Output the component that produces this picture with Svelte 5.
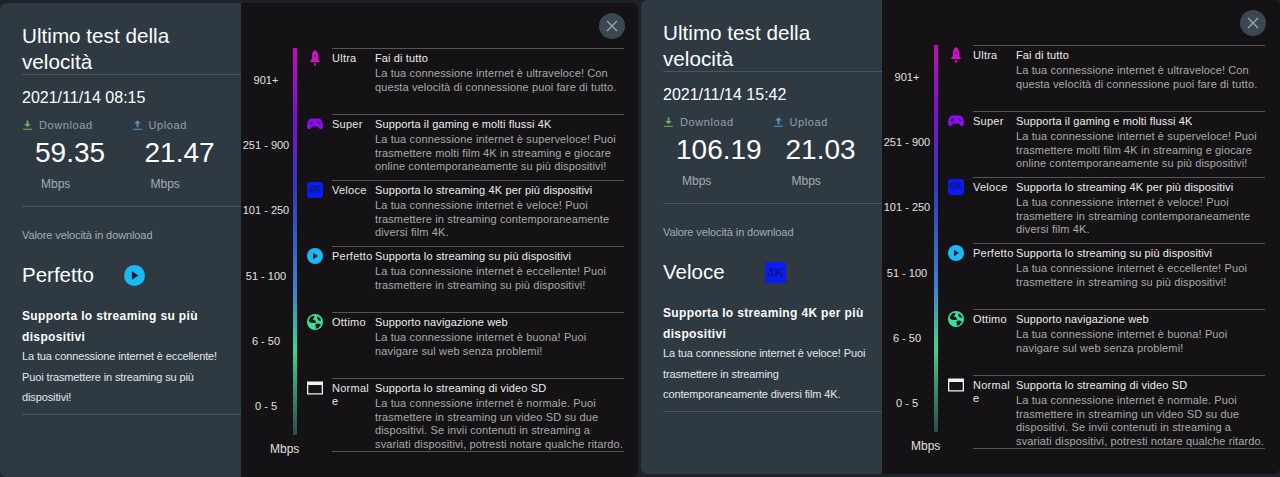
<script>
  const tests = [
    {
      date: '2021/11/14 08:15', down: '59.35', up: '21.47',
      level: 'Perfetto', icon: 'play',
      head: 'Supporta lo streaming su più dispositivi',
      text: 'La tua connessione internet è eccellente! Puoi trasmettere in streaming su più dispositivi!'
    },
    {
      date: '2021/11/14 15:42', down: '106.19', up: '21.03',
      level: 'Veloce', icon: '4k',
      head: 'Supporta lo streaming 4K per più dispositivi',
      text: 'La tua connessione internet è veloce! Puoi trasmettere in streaming contemporaneamente diversi film 4K.'
    }
  ]

  const ranges = ['901+', '251 - 900', '101 - 250', '51 - 100', '6 - 50', '0 - 5']

  const levels = [
    { icon: 'rocket', name: 'Ultra', head: 'Fai di tutto', text: 'La tua connessione internet è ultraveloce! Con questa velocità di connessione puoi fare di tutto.' },
    { icon: 'pad', name: 'Super', head: 'Supporta il gaming e molti flussi 4K', text: 'La tua connessione internet è superveloce! Puoi trasmettere molti film 4K in streaming e giocare online contemporaneamente su più dispositivi!' },
    { icon: '4k', name: 'Veloce', head: 'Supporta lo streaming 4K per più dispositivi', text: 'La tua connessione internet è veloce! Puoi trasmettere in streaming contemporaneamente diversi film 4K.' },
    { icon: 'play', name: 'Perfetto', head: 'Supporta lo streaming su più dispositivi', text: 'La tua connessione internet è eccellente! Puoi trasmettere in streaming su più dispositivi!' },
    { icon: 'globe', name: 'Ottimo', head: 'Supporto navigazione web', text: 'La tua connessione internet è buona! Puoi navigare sul web senza problemi!' },
    { icon: 'window', name: 'Normale', head: 'Supporta lo streaming di video SD', text: 'La tua connessione internet è normale. Puoi trasmettere in streaming un video SD su due dispositivi. Se invii contenuti in streaming a svariati dispositivi, potresti notare qualche ritardo.' }
  ]
</script>

{#snippet levelIcon(kind)}
  {#if kind === 'rocket'}
    <svg class="ico" viewBox="0 0 16 16"><path fill="#d40fc8" d="M8 0c2 1.200 3 3 3 5.200v3.300L13.200 12H2.800L5 8.500V5.200C5 3 6 1.200 8 0z"/><circle cx="8" cy="5.800" r="1.300" fill="#8a0a84"/><rect x="7.100" y="13" width="1.800" height="3" rx=".9" fill="#d40fc8"/></svg>
  {:else if kind === 'pad'}
    <svg class="ico" viewBox="0 0 16 16"><path fill="#8a10e8" d="M4.400 2.500h7.200C14 2.500 16 6 16 10c0 2.400-1 3.300-2.200 3.300-1.400 0-2-1.800-3.200-2.800H5.400c-1.200 1-1.800 2.800-3.200 2.800C1 13.300 0 12.400 0 10 0 6 2 2.500 4.400 2.500z"/><path fill="#3a0a70" d="M3.700 5.400h1.100v1.100h1.100v1.100H4.800v1.100H3.700V7.600H2.600V6.500h1.100z"/><circle cx="11" cy="5.900" r=".9" fill="#3a0a70"/><circle cx="12.600" cy="7.600" r=".9" fill="#3a0a70"/></svg>
  {:else if kind === '4k'}
    <span class="ico fourk">4K</span>
  {:else if kind === 'play'}
    <svg class="ico" viewBox="0 0 16 16"><circle cx="8" cy="8" r="8" fill="#19b9f5"/><path fill="#141f2a" d="M6 4.800 11 8l-5 3.200z"/></svg>
  {:else if kind === 'globe'}
    <svg class="ico" viewBox="0 0 16 16"><circle cx="8" cy="8" r="8" fill="#34e39a"/><path fill="#141214" d="M1.500 6.500 4 2.400 7.500 1.800 7 4 5.600 5.200 8.400 6.600 9 9H6L3.200 8.500zM8.500 10l3.400-.5 2 1.200-2.500 3.200-2.400.8-.4-2.600zM10.400 2.200l2.800 2 .8 2.800-2.400-.6-1.400-1.800z"/></svg>
  {:else}
    <svg class="ico" viewBox="0 0 16 16"><path fill="#f2f2f2" d="M0 1.500h16v13H0zm1.300 3.400v8.300h13.400V4.900z"/></svg>
  {/if}
{/snippet}

<div class="page">
  {#each tests as t}
    <section class="panel">
      <div class="summary">
        <h2>Ultimo test della velocità</h2>
        <div class="date">{t.date}</div>
        <div class="speeds">
          <div class="speed">
            <div class="label">
              <svg viewBox="0 0 12 12"><path fill="#6fae5a" d="M5 1h2v4h2.500L6 8.500 2.500 5H5zM1 10h10v1.200H1z"/></svg>
              Download
            </div>
            <div class="value">{t.down}</div>
            <div class="unit">Mbps</div>
          </div>
          <div class="speed">
            <div class="label">
              <svg viewBox="0 0 12 12"><path fill="#4f93cf" d="M6 .8 9.500 4.300H7v4.200H5V4.300H2.500zM1 10h10v1.200H1z"/></svg>
              Upload
            </div>
            <div class="value">{t.up}</div>
            <div class="unit">Mbps</div>
          </div>
        </div>
        <div class="caption">Valore velocità in download</div>
        <div class="level">
          <span class="level-name">{t.level}</span>
          <span class="big-ico">{@render levelIcon(t.icon)}</span>
        </div>
        <h3>{t.head}</h3>
        <p>{t.text}</p>
      </div>

      <div class="chart">
        <button class="close" aria-label="Chiudi">
          <svg viewBox="0 0 12 12"><path d="M1 1l10 10M11 1 1 11" stroke="#9aa5ad" stroke-width="1.400" fill="none"/></svg>
        </button>
        <div class="scale">
          <div class="ranges">
            {#each ranges as r}
              <div>{r}</div>
            {/each}
          </div>
          <div class="bar"></div>
          <div class="scale-unit">Mbps</div>
        </div>
        <div class="levels">
          {#each levels as l}
            <div class="row">
              <div class="row-ico">{@render levelIcon(l.icon)}</div>
              <div class="row-body">
                <div class="name">{l.name}</div>
                <div>
                  <div class="head">{l.head}</div>
                  <div class="text">{l.text}</div>
                </div>
              </div>
            </div>
          {/each}
        </div>
      </div>
    </section>
  {/each}
</div>

<style>
  :global(body) {
    margin: 0;
    background: #1c2228;
    font-family: "Liberation Sans", Arial, sans-serif;
  }
  .page {
    display: flex;
    gap: 3px;
    width: 1280px;
    height: 477px;
    overflow: hidden;
  }
  .panel {
    display: flex;
    flex: none;
    height: 474px;
    width: 638px;
    border-radius: 6px;
    overflow: hidden;
    background: #141214;
  }
  .panel:first-child {
    margin-top: 3px;
  }
  .panel:last-child {
    width: 639px;
  }
  .summary {
    box-sizing: border-box;
    width: 241px;
    flex: none;
    padding: 20px 0 0 22px;
    background: #2e3942;
    color: #fff;
  }
  h2 {
    margin: 0;
    padding-right: 40px;
    font-size: 20.700px;
    font-weight: 400;
    line-height: 26px;
    height: 51px;
    border-bottom: 1px solid #4a555e;
  }
  .date {
    margin-top: 14px;
    font-size: 16px;
    line-height: 18px;
  }
  .speeds {
    display: flex;
    margin-top: 11px;
    height: 88px;
    border-bottom: 1px solid #4a555e;
  }
  .speed {
    width: 110px;
  }
  .label {
    display: flex;
    align-items: center;
    gap: 6px;
    height: 14px;
    font-size: 11px;
    letter-spacing: .6px;
    color: #95a0a8;
  }
  .label svg {
    width: 11px;
    height: 12px;
  }
  .value {
    margin: 5px 0 0 13px;
    font-size: 28px;
    line-height: 32px;
  }
  .unit {
    margin: 8px 0 0 19px;
    font-size: 12px;
    line-height: 14px;
    color: #a3adb4;
  }
  .caption {
    margin-top: 22px;
    font-size: 11px;
    letter-spacing: -.1px;
    line-height: 13px;
    color: #a3adb4;
  }
  .level {
    display: flex;
    align-items: center;
    margin-top: 20px;
    height: 26px;
  }
  .level-name {
    width: 102px;
    font-size: 20.500px;
  }
  .big-ico {
    display: flex;
  }
  .big-ico .ico {
    width: 21px;
    height: 21px;
    font-size: 13px;
    line-height: 21px;
  }
  h3 {
    margin: 18px 0 0;
    font-size: 12px;
    font-weight: 700;
    line-height: 21px;
    letter-spacing: .35px;
    padding-right: 14px;
  }
  p {
    margin: -2px 0 0;
    padding: 0 8px 6px 0;
    font-size: 11px;
    letter-spacing: -.12px;
    line-height: 20.500px;
    color: #e4e7e9;
    border-bottom: 1px solid #4a555e;
  }
  .chart {
    position: relative;
    flex: 1;
    display: flex;
    padding-top: 45px;
    color: #e0e0e0;
    font-size: 11px;
  }
  .close {
    position: absolute;
    top: 10px;
    left: 358px;
    width: 26px;
    height: 26px;
    padding: 0;
    border: 0;
    border-radius: 50%;
    background: #3a4852;
    display: flex;
    align-items: center;
    justify-content: center;
  }
  .close svg {
    width: 12px;
    height: 12px;
  }
  .scale {
    position: relative;
    flex: none;
    width: 56px;
    display: flex;
  }
  .ranges {
    width: 50px;
    margin-right: 2px;
    text-align: center;
  }
  .ranges div {
    height: 65.200px;
    line-height: 65.200px;
  }
  .bar {
    width: 4px;
    height: 387px;
    background: linear-gradient(#c40fb8 0%, #7a10d0 17%, #2f3fc0 38%, #3a80d0 62%, #36d890 78%, #2f4a48 100%);
  }
  .scale-unit {
    position: absolute;
    left: 29px;
    top: 394px;
    font-size: 12px;
    line-height: 14px;
  }
  .levels {
    width: 327px;
    flex: none;
  }
  .row {
    display: flex;
    height: 66px;
  }
  .row:last-child {
    height: 74px;
  }
  .row-ico {
    flex: none;
    width: 35px;
    padding: 2px 0 0 10px;
    box-sizing: border-box;
  }
  .ico {
    display: block;
    width: 16px;
    height: 16px;
  }
  .fourk {
    background: #0a1cf0;
    color: #0b1590;
    border-radius: 3px;
    text-align: center;
    font-size: 10px;
    font-weight: 700;
    line-height: 16px;
  }
  .row-body {
    flex: 1;
    box-sizing: border-box;
    display: flex;
    border-top: 1px solid #555;
    padding-top: 3px;
    line-height: 13.400px;
    min-width: 0;
  }
  .row:last-child .row-body {
    border-bottom: 1px solid #555;
  }
  .name {
    flex: none;
    box-sizing: border-box;
    width: 43px;
    padding-right: 1px;
    color: #e8e8e8;
    overflow-wrap: anywhere;
    font-size: 11px;
    letter-spacing: .25px;
  }
  .head {
    color: #eee;
    font-size: 11px;
    letter-spacing: .13px;
    margin-bottom: 2px;
  }
  .text {
    color: #aaa;
    font-size: 11px;
    letter-spacing: .13px;
  }
</style>
